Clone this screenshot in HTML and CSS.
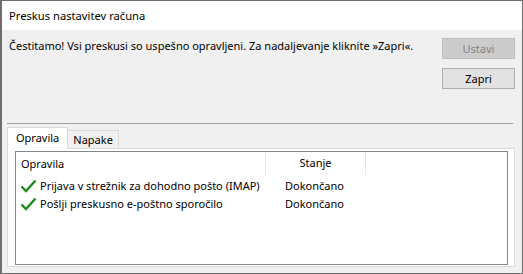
FILE: index.html
```html
<!DOCTYPE html>
<html lang="sl">
<head>
    <meta charset="UTF-8">
    <title>Preskus nastavitev računa</title>
    <link rel="stylesheet" href="styles.css">
</head>
<body>
    <div class="window">
        <div class="titlebar">Preskus nastavitev računa</div>
        <div class="content">
            <div class="top-row">
                <div class="message">Čestitamo! Vsi preskusi so uspešno opravljeni. Za nadaljevanje kliknite »Zapri«.</div>
                <div class="buttons">
                    <button class="btn" disabled>Ustavi</button>
                    <button class="btn">Zapri</button>
                </div>
            </div>

            <div class="separator"></div>

            <div class="tabs">
                <div class="tab active">Opravila</div>
                <div class="tab">Napake</div>
            </div>
            <div class="tab-panel">
                <div class="list-view">
                    <div class="list-header">
                        <div class="col col-task">Opravila</div>
                        <div class="col col-status">Stanje</div>
                    </div>
                    <div class="list-row">
                        <div class="col col-task">
                            <svg class="check" width="17" height="14" viewBox="0 0 17 14">
                                <path d="M1.5 7.5 L6 12 L15.5 1.5" fill="none" stroke="#1f8a1f" stroke-width="2.4"/>
                            </svg>
                            Prijava v strežnik za dohodno pošto (IMAP)
                        </div>
                        <div class="col col-status">Dokončano</div>
                    </div>
                    <div class="list-row">
                        <div class="col col-task">
                            <svg class="check" width="17" height="14" viewBox="0 0 17 14">
                                <path d="M1.5 7.5 L6 12 L15.5 1.5" fill="none" stroke="#1f8a1f" stroke-width="2.4"/>
                            </svg>
                            Pošlji preskusno e-poštno sporočilo
                        </div>
                        <div class="col col-status">Dokončano</div>
                    </div>
                </div>
            </div>
        </div>
    </div>
</body>
</html>
```

FILE: styles.css
```css
body {
    margin: 0;
    font-family: 'Noto Sans', 'Open Sans', sans-serif;
    font-size: 11px;
    color: #000;
    background-color: #f0f0f0;
}

.window {
    width: 523px;
    height: 274px;
    box-sizing: border-box;
    border: 1px solid #6e6e6e;
    border-left-width: 2px;
    background-color: #f0f0f0;
    display: flex;
    flex-direction: column;
}

.titlebar {
    height: 29px;
    background-color: #fff;
    padding-left: 7px;
    line-height: 30px;
    font-size: 11.2px;
}

.content {
    flex-grow: 1;
    padding: 0 7px 0 5px;
}

.top-row {
    display: flex;
    justify-content: space-between;
    padding-top: 8px;
}

.message {
    padding-left: 2px;
    line-height: 16px;
    white-space: nowrap;
}

.buttons {
    display: flex;
    flex-direction: column;
    gap: 9px;
}

.btn {
    width: 73px;
    height: 21px;
    box-sizing: border-box;
    background-color: #e1e1e1;
    border: 1px solid #adadad;
    font-family: inherit;
    font-size: 11px;
    color: #000;
    padding: 0;
    border-radius: 0;
}

.btn:disabled {
    background-color: #cccccc;
    border-color: #bfbfbf;
    color: #838383;
}

.separator {
    height: 1px;
    background-color: #a0a0a0;
    margin-top: 34px;
    width: 506px;
}

.tabs {
    display: flex;
    align-items: flex-end;
    margin-top: 3px;
    height: 21px;
}

.tab {
    box-sizing: border-box;
    border: 1px solid #d9d9d9;
    border-bottom: none;
    height: 18px;
    line-height: 17px;
    padding: 0 5px;
    margin-left: -1px;
}

.tab:first-child {
    margin-left: 0;
}

.tab.active {
    background-color: #fff;
    height: 22px;
    line-height: 20px;
    padding: 0 8px;
    position: relative;
    z-index: 1;
    margin-bottom: -1px;
}

.tab-panel {
    box-sizing: border-box;
    width: 508px;
    height: 119px;
    border: 1px solid #d9d9d9;
    background-color: #fff;
    padding: 2px 6px 1px 7px;
}

.list-view {
    box-sizing: border-box;
    height: 100%;
    border: 1px solid #828790;
}

.list-header {
    display: flex;
    height: 23px;
    line-height: 22px;
}

.list-header .col-task {
    padding-left: 5px;
}

.list-header .col-status {
    border-left: 1px solid #e5e5e5;
    border-right: 1px solid #e5e5e5;
}

.col-task {
    width: 244px;
    padding-left: 4px;
    display: flex;
    align-items: center;
    white-space: nowrap;
}

.col-status {
    width: 99px;
    text-align: center;
    white-space: nowrap;
}

.list-row {
    display: flex;
    height: 18px;
    line-height: 18px;
}

.list-header + .list-row {
    margin-top: 2px;
}

.list-row .col-task {
    padding-left: 4px;
}

.list-row .col-status {
    padding-left: 1px;
}

.check {
    margin-right: 3px;
    flex-shrink: 0;
}
```
